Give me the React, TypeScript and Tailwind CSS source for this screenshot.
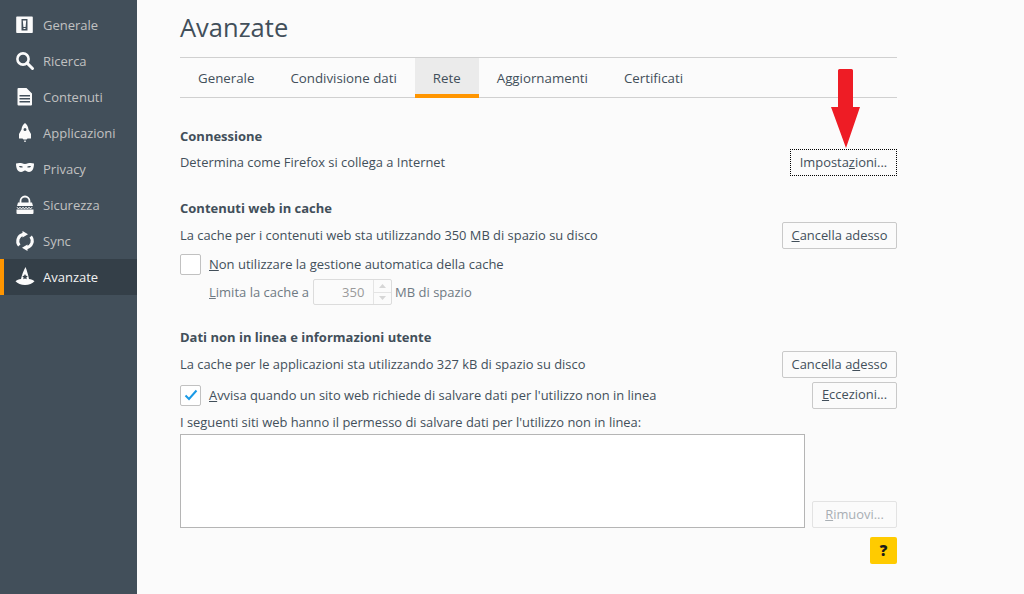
const NAV = [
  ["Generale", "general"], ["Ricerca", "search"], ["Contenuti", "content"], ["Applicazioni", "apps"],
  ["Privacy", "privacy"], ["Sicurezza", "security"], ["Sync", "sync"], ["Avanzate", "advanced"],
];

const TABS = ["Generale", "Condivisione dati", "Rete", "Aggiornamenti", "Certificati"];

function NavIcon({ name }: { name: string }) {
  return (
    <svg width="20" height="20" viewBox="0 0 20 20" fill="#fbfbfb" className="shrink-0">
      {name === "general" && (
        <path fillRule="evenodd" d="M2 1.500h15a.8.8 0 0 1 .8.8v15a.8.8 0 0 1-.8.8H2a.8.8 0 0 1-.8-.8v-15a.8.8 0 0 1 .8-.8ZM6.500 4v11.500h6V4Zm1.300 1.500h3.400l-.6 6.500H8.400Zm.7 7.500h2v1h-2Z" />
      )}
      {name === "search" && (
        <>
          <circle cx="8" cy="8" r="5.600" fill="none" stroke="#fbfbfb" strokeWidth="2.600" />
          <path d="M12 12l5.500 5.500" stroke="#fbfbfb" strokeWidth="3" strokeLinecap="round" />
        </>
      )}
      {name === "content" && (
        <path fillRule="evenodd" d="M3.500 1h8l5.500 5.500v11a1 1 0 0 1-1 1h-12.500a1 1 0 0 1-1-1v-15.500a1 1 0 0 1 1-1Zm1 7v1.500h10.500V8Zm0 3v1.500h10.500V11Zm0 3v1.500h10.500V14Z" />
      )}
      {name === "apps" && (
        <path fillRule="evenodd" d="M10 0c2 1.500 3.200 3.800 3.500 6.500l2.500 4.500v4.500h-3.500l-1 1h-3l-1-1H4V11l2.500-4.500C6.800 3.800 8 1.500 10 0Zm0 5a1.500 1.500 0 1 0 0 3 1.500 1.500 0 0 0 0-3ZM9.300 17.500h1.400V19H9.300Z" />
      )}
      {name === "privacy" && (
        <path fillRule="evenodd" d="M1 4.500c3-1 5.500-.6 9 .6 3.500-1.200 6-1.600 9-.6 0 4.500-1.500 8.500-5 8.500-2 0-2.800-1.500-4-1.500S8 13 6 13c-3.500 0-5-4-5-8.500Zm3 3c.8 1.200 3 1.400 4 .4-1-1-3.200-1.100-4-.4Zm12 0c-.8 1.200-3 1.400-4 .4 1-1 3.200-1.100 4-.4Z" />
      )}
      {name === "security" && (
        <>
          <path d="M5.500 8V6a4.500 4.500 0 0 1 9 0V8" fill="none" stroke="#fbfbfb" strokeWidth="1.800" />
          <path d="M3 7.500h14l1 3.500H2Z" />
          <path d="M1.500 14.500h17V18a1 1 0 0 1-1 1h-15a1 1 0 0 1-1-1Z" />
          <path d="M2 12.200l1.500 1.800 1.500-1.800 1.500 1.800 1.500-1.800 1.500 1.800 1.500-1.800 1.500 1.800 1.500-1.800 1.500 1.800 1.500-1.800" fill="none" stroke="#fbfbfb" strokeWidth="1" />
        </>
      )}
      {name === "sync" && (
        <>
          <path d="M4.300 14.500A7 7 0 0 1 8.500 3.200M15.700 5.500a7 7 0 0 1-4.200 11.300" fill="none" stroke="#fbfbfb" strokeWidth="3" />
          <path d="M7.500 0l5.500 3.200-5.500 3.200ZM12.500 13.600l-5.500 3.200 5.500 3.200Z" />
        </>
      )}
      {name === "advanced" && (
        <path fillRule="evenodd" d="M10.500 0c1.300 3 2.700 8 3.500 12 2 .3 4.500 1.200 5.500 2.200-2 2-5.500 3.800-9.500 3.800S2.500 16.200.5 14.200c1-1 3.500-1.900 5.500-2.200 .8-4 2.700-8.500 4.500-12Zm-.5 7-.9 1.800-1.900.3 1.400 1.300-.3 1.900 1.700-.9 1.700.9-.3-1.900 1.400-1.300-1.900-.3Z" />
      )}
    </svg>
  );
}

function Btn({ children, className = "" }: { children: React.ReactNode; className?: string }) {
  return (
    <div className={`flex h-[27px] shrink-0 items-center justify-center rounded-[2px] border border-[#c9c9c9] bg-[#fbfbfb] text-[12.900px] text-[#424f5a] ${className}`}>
      {children}
    </div>
  );
}

function Checkbox({ checked }: { checked?: boolean }) {
  return (
    <div className="flex h-[21px] w-[21px] shrink-0 items-center justify-center rounded-[2px] border border-[#c1c1c1] bg-white">
      {checked && (
        <svg width="14" height="12" viewBox="0 0 14 12" fill="none">
          <path d="M1.500 6.500l3.500 3.500 7.500-8.500" stroke="#1a9ae6" strokeWidth="2" />
        </svg>
      )}
    </div>
  );
}

export default function App() {
  return (
    <div className="relative flex h-[594px] w-[1024px] overflow-hidden bg-[#fbfbfb] font-['Open_Sans',sans-serif] text-[12.900px] text-[#424f5a]">
      <aside className="w-[137px] shrink-0 bg-[#424f5a] pt-[7px]">
        {NAV.map(([label, icon]) => (
          <div
            key={label}
            className={
              label === "Avanzate"
                ? "flex h-[36px] items-center gap-[8px] border-l-[4px] border-[#ff9500] bg-[#343f48] pl-[11px] text-[#f2f2f2]"
                : "flex h-[36px] items-center gap-[8px] border-l-[4px] border-transparent pl-[11px] text-[#c1c1c1]"
            }
          >
            <NavIcon name={icon} />
            <span className="pt-[2px] text-[13px]">{label}</span>
          </div>
        ))}
      </aside>

      <main className="w-[717px] ml-[43px]">
        <h1 className="flex h-[57px] items-center pb-[1px] text-[25.500px] leading-none text-[#424f5a]">Avanzate</h1>

        <div className="flex h-[41px] border-y border-[#d0d0d0]">
          {TABS.map((tab) => (
            <div
              key={tab}
              className={
                tab === "Rete"
                  ? "flex h-[40px] items-center border-b-[4px] border-[#ff9500] bg-[#ebebeb] px-[18px] pt-[5px] text-[13.300px] text-[#424f5a]"
                  : "flex h-[40px] items-center px-[18px] pt-[1px] text-[13.300px] text-[#424f5a]"
              }
            >
              {tab}
            </div>
          ))}
        </div>

        <h2 className="mt-[29px] h-[18px] text-[13px] font-bold leading-[18px] text-[#424f5a]">Connessione</h2>
        <div className="mt-[4px] flex h-[27px] items-center justify-between">
          <span>Determina come Firefox si collega a Internet</span>
          <Btn className="w-[107px] rounded-none border-dotted border-black">
            <span>Imposta<span className="underline">z</span>ioni...</span>
          </Btn>
        </div>

        <h2 className="mt-[23px] h-[18px] text-[13px] font-bold leading-[18px]">Contenuti web in cache</h2>
        <div className="mt-[5px] flex h-[26px] items-center justify-between pt-[1px]">
          <span>La cache per i contenuti web sta utilizzando 350 MB di spazio su disco</span>
          <Btn className="h-[26px] w-[115px]">
            <span><span className="underline">C</span>ancella adesso</span>
          </Btn>
        </div>
        <div className="mt-[6px] flex h-[21px] items-center">
          <Checkbox />
          <span className="ml-[8px] pt-[1px] text-[13px]"><span className="underline">N</span>on utilizzare la gestione automatica della cache</span>
        </div>
        <div className="mt-[4px] flex h-[26px] items-center pl-[29px] text-[13px] text-[#6f7a83]">
          <span className="pt-[1px]"><span className="underline">L</span>imita la cache a</span>
          <div className="ml-[4px] flex h-[26px] w-[79px] items-center justify-between rounded-[2px] border border-[#dcdcdc] bg-[#fbfbfb]">
            <span className="ml-[28px] pt-[1px] text-[#9a9a9a]">350</span>
            <div className="flex h-full w-[18px] flex-col border-l border-[#e4e4e4]">
              <div className="flex flex-1 items-center justify-center border-b border-[#e4e4e4]">
                <svg width="7" height="4" viewBox="0 0 7 4" fill="#d6d6d6"><path d="M3.500 0l3.500 4H0Z" /></svg>
              </div>
              <div className="flex flex-1 items-center justify-center">
                <svg width="7" height="4" viewBox="0 0 7 4" fill="#d6d6d6"><path d="M3.500 4L7 0H0Z" /></svg>
              </div>
            </div>
          </div>
          <span className="ml-[3px] pt-[1px]">MB di spazio</span>
        </div>

        <h2 className="mt-[23px] h-[18px] text-[13px] font-bold leading-[18px]">Dati non in linea e informazioni utente</h2>
        <div className="mt-[5px] flex h-[26px] items-center justify-between pt-[1px]">
          <span>La cache per le applicazioni sta utilizzando 327 kB di spazio su disco</span>
          <Btn className="h-[26px] w-[115px]">
            <span>Cancella a<span className="underline">d</span>esso</span>
          </Btn>
        </div>
        <div className="mt-[5px] flex h-[26px] items-center">
          <Checkbox checked />
          <span className="ml-[8px] pt-[1px]"><span className="underline">A</span>vvisa quando un sito web richiede di salvare dati per l'utilizzo non in linea</span>
          <Btn className="ml-auto h-[26px] w-[85px]">
            <span><span className="underline">E</span>ccezioni...</span>
          </Btn>
        </div>
        <div className="mt-[5px] flex h-[18px] items-center pt-[1px]">I seguenti siti web hanno il permesso di salvare dati per l'utilizzo non in linea:</div>

        <div className="mt-[3px] flex items-end justify-between">
          <div className="h-[94px] w-[625px] border border-[#b5b5b5] bg-white" />
          <Btn className="w-[85px] border-[#e3e3e3] text-[#a9afb4]">
            <span><span className="underline">R</span>imuovi...</span>
          </Btn>
        </div>
        <div className="mt-[9px] flex justify-end">
          <div className="flex h-[27px] w-[27px] items-center justify-center rounded-[2px] bg-[#ffcb00] text-[15px] font-extrabold text-[#1a1a1a]">?</div>
        </div>
      </main>

      <svg width="30" height="80" viewBox="0 0 30 80" className="absolute left-[830px] top-[69px]">
        <path d="M8 1.500A1.500 1.500 0 0 1 9.500 0h12a1.500 1.500 0 0 1 1.500 1.500V38h7L16 79 1 38h7Z" fill="#ee1c25" />
      </svg>
    </div>
  );
}
